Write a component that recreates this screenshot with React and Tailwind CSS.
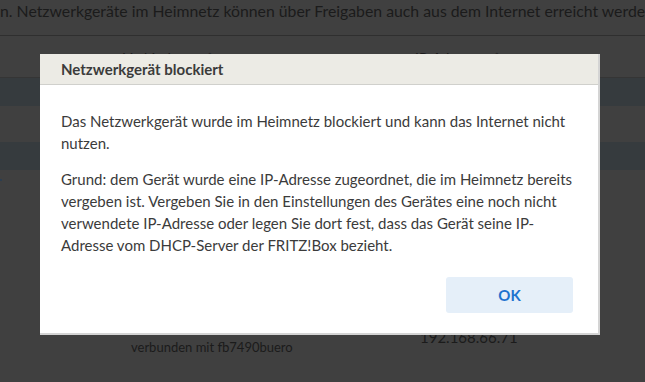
export default function App() {
  return (
    <div className="relative w-[645px] h-[382px] overflow-hidden bg-[#404040] font-['Lato',sans-serif] text-[#1b1b1b]">
      <div className="h-[36px] border-b border-[#2f2f2f] pt-[1px] text-[15.8px] leading-[20px] whitespace-nowrap">
        n. Netzwerkgeräte im Heimnetz können über Freigaben auch aus dem Internet erreicht werden
      </div>
      <div className="h-[41px] flex items-end text-[14px] leading-[18px] pb-[10px]">
        <div className="ml-[123px] w-[292px] flex items-center gap-[10px]">
          <span>Verbindung</span>
          <span className="text-[#2a2a2a]">⌃</span>
        </div>
        <div className="flex items-center gap-[10px]">
          <span>IP-Adresse</span>
          <span className="text-[#2a2a2a]">⌃</span>
        </div>
      </div>
      <div className="h-[29px] bg-[#363b3e] border-t border-[#353535]" />
      <div className="h-[36px]" />
      <div className="h-[28px] bg-[#363b3e]" />
      <div className="h-[30px] relative">
        <span className="absolute left-0 top-[9px] w-[2px] h-[2px] bg-[#2c3e50]" />
      </div>
      <div className="flex pt-[128px]">
        <div className="ml-[131px] w-[289px] mt-[11px] text-[13px] leading-[16px]">verbunden mit fb7490buero</div>
        <div className="text-[15px] leading-[18px]">192.168.66.71</div>
      </div>

      <div className="absolute left-[40px] top-[54px] w-[560px] h-[281px] bg-white border-r-2 border-b-2 border-[#d4d4d4] flex flex-col">
        <div className="h-[31px] bg-[#ecebe5] border-b border-[#d0d0cc] px-[21px] flex items-center text-[15px] font-bold text-[#3b3b3b]">
          Netzwerkgerät blockiert
        </div>
        <div className="px-[21px] pt-[25px] text-[15px] leading-[22px] text-[#3b3b3b]">
          <p>Das Netzwerkgerät wurde im Heimnetz blockiert und kann das Internet nicht nutzen.</p>
          <p className="mt-[14px]">
            Grund: dem Gerät wurde eine IP-Adresse zugeordnet, die im Heimnetz bereits vergeben ist. Vergeben Sie in den Einstellungen des Gerätes eine noch nicht verwendete IP-Adresse oder legen Sie dort fest, dass das Gerät seine IP-Adresse vom DHCP-Server der FRITZ!Box bezieht.
          </p>
        </div>
        <div className="mt-auto mb-[20px] mr-[25px] flex justify-end">
          <button className="w-[127px] h-[36px] rounded-[3px] bg-[#e5eff9] text-[#1e73cf] text-[15px] font-bold">OK</button>
        </div>
      </div>
    </div>
  );
}
